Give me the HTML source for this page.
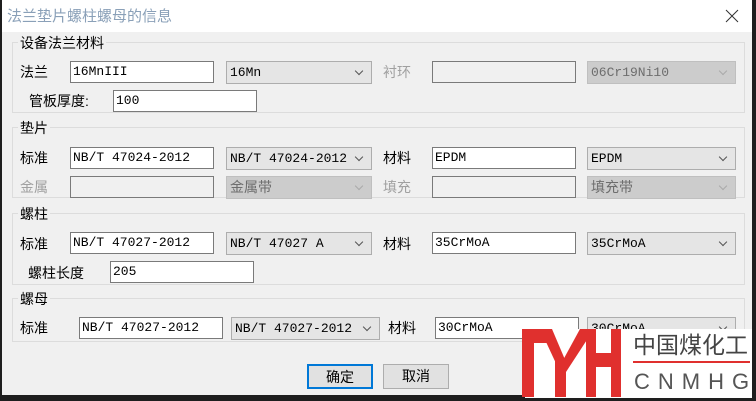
<!DOCTYPE html>
<html><head><meta charset="utf-8"><style>
*{margin:0;padding:0;box-sizing:border-box}
body{width:756px;height:401px;overflow:hidden;background:#1e1e1e;position:relative;font-family:"Liberation Sans","Noto Sans CJK SC",sans-serif;font-size:14px;color:#000}
.a{position:absolute;white-space:nowrap}
.dlg{left:2px;top:0;width:750px;height:395px;background:#f0f0f0}
.tb{left:2px;top:0;width:750px;height:32px;background:#fff}
.grp{border:1px solid #dcdcdc}
.gl{background:#f0f0f0;padding:0 2px;line-height:16px;font-size:14px}
.lb{font-size:14px;line-height:16px}
.dis{color:#a0a0a0}
.in{background:#fff;border:1px solid #7a7a7a;font-family:"Liberation Mono",monospace;font-size:13px;line-height:19px;padding-left:2px;height:22px;overflow:hidden}
.in.d{background:#f0f0f0;border-color:#7a7a7a}
.sel{background:#e5e5e5;border:1px solid #adadad;font-family:"Liberation Mono",monospace;font-size:13px;line-height:21px;padding-left:3px;height:23px;overflow:hidden}
.sel.d{background:#cccccc;border-color:#bfbfbf;color:#6d6d6d}
.sel:after{content:"";position:absolute;right:9px;top:6px;width:5px;height:5px;border-right:1px solid #555;border-bottom:1px solid #555;transform:rotate(45deg)}
.sel.d:after{border-color:#aaa}
.btn{background:#e1e1e1;border:1px solid #adadad;text-align:center;line-height:22px;font-size:14px;height:25px}
</style></head><body>
<div class="a dlg"></div>
<div class="a tb"></div>
<div class="a" style="left:7px;top:8px;font-size:15px;color:#8aa0b8;line-height:18px">法兰垫片螺柱螺母的信息</div>
<svg class="a" style="left:724px;top:8px" width="16" height="16"><path d="M2 2L14 14M14 2L2 14" stroke="#333" stroke-width="1"/></svg>

<div class="a grp" style="left:12px;top:42px;width:733px;height:71px"></div>
<div class="a gl" style="left:18px;top:35px">设备法兰材料</div>
<div class="a lb" style="left:20px;top:64px">法兰</div>
<div class="a in" style="left:70px;top:61px;width:144px">16MnIII</div>
<div class="a sel" style="left:226px;top:61px;width:146px">16Mn</div>
<div class="a lb dis" style="left:383px;top:64px">衬环</div>
<div class="a in d" style="left:432px;top:61px;width:144px"></div>
<div class="a sel d" style="left:587px;top:61px;width:149px">06Cr19Ni10</div>
<div class="a lb" style="left:29px;top:93px">管板厚度:</div>
<div class="a in" style="left:113px;top:90px;width:144px">100</div>

<div class="a grp" style="left:12px;top:127px;width:733px;height:71px"></div>
<div class="a gl" style="left:18px;top:120px">垫片</div>
<div class="a lb" style="left:20px;top:150px">标准</div>
<div class="a in" style="left:70px;top:147px;width:144px">NB/T 47024-2012</div>
<div class="a sel" style="left:226px;top:147px;width:146px">NB/T 47024-2012</div>
<div class="a lb" style="left:383px;top:150px">材料</div>
<div class="a in" style="left:432px;top:147px;width:144px">EPDM</div>
<div class="a sel" style="left:587px;top:147px;width:149px">EPDM</div>
<div class="a lb dis" style="left:20px;top:179px">金属</div>
<div class="a in d" style="left:70px;top:176px;width:144px"></div>
<div class="a sel d" style="left:226px;top:176px;width:146px;font-family:'Liberation Sans','Noto Sans CJK SC',sans-serif;font-size:14px">金属带</div>
<div class="a lb dis" style="left:383px;top:179px">填充</div>
<div class="a in d" style="left:432px;top:176px;width:144px"></div>
<div class="a sel d" style="left:587px;top:176px;width:149px;font-family:'Liberation Sans','Noto Sans CJK SC',sans-serif;font-size:14px">填充带</div>

<div class="a grp" style="left:12px;top:213px;width:733px;height:72px"></div>
<div class="a gl" style="left:18px;top:206px">螺柱</div>
<div class="a lb" style="left:20px;top:236px">标准</div>
<div class="a in" style="left:70px;top:232px;width:144px">NB/T 47027-2012</div>
<div class="a sel" style="left:226px;top:232px;width:146px">NB/T 47027 A</div>
<div class="a lb" style="left:383px;top:236px">材料</div>
<div class="a in" style="left:432px;top:232px;width:144px">35CrMoA</div>
<div class="a sel" style="left:587px;top:232px;width:149px">35CrMoA</div>
<div class="a lb" style="left:28px;top:265px">螺柱长度</div>
<div class="a in" style="left:110px;top:261px;width:144px">205</div>

<div class="a grp" style="left:12px;top:298px;width:733px;height:44px"></div>
<div class="a gl" style="left:18px;top:291px">螺母</div>
<div class="a lb" style="left:20px;top:320px">标准</div>
<div class="a in" style="left:79px;top:317px;width:144px">NB/T 47027-2012</div>
<div class="a sel" style="left:231px;top:317px;width:149px">NB/T 47027-2012</div>
<div class="a lb" style="left:388px;top:320px">材料</div>
<div class="a in" style="left:435px;top:317px;width:144px">30CrMoA</div>
<div class="a sel" style="left:587px;top:317px;width:149px">30CrMoA</div>

<div class="a btn" style="left:307px;top:364px;width:66px;border:2px solid #0078d7">确定</div>
<div class="a btn" style="left:383px;top:364px;width:66px">取消</div>

<div class="a" style="left:525px;top:329px;width:227px;height:69px;background:#fff"></div>
<svg class="a" style="left:0;top:0" width="756" height="401">
<g fill="#e0302e">
<rect x="522" y="329" width="12" height="68"/>
<rect x="522" y="329" width="26" height="14"/>
<polygon points="540,329 552,329 566,362 560,372"/>
<rect x="555" y="360" width="11" height="37"/>
<polygon points="580,329 594,329 566,372 562,362"/>
<rect x="586" y="329" width="10" height="68"/>
<rect x="611" y="329" width="10" height="68"/>
<rect x="586" y="353" width="35" height="14"/>
</g>
<rect x="633" y="361" width="117" height="2" fill="#e0302e"/>
</svg>
<div class="a" style="left:633px;top:332px;font-size:23px;line-height:26px;color:#444">中国煤化工</div>
<div class="a" style="left:634px;top:369px;font-size:22px;line-height:26px;color:#555;letter-spacing:8px">CNMHG</div>
</body></html>
